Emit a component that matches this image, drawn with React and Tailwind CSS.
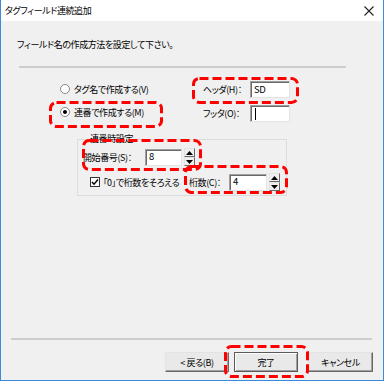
import React from 'react'

const fuente = {
  fontFamily: '"Noto Sans CJK JP", "Noto Sans", sans-serif',
}

// marco rojo punteado (anotación sobre la captura)
const Marca = ({ x, y, w, h }) => (
  <svg
    className="absolute pointer-events-none"
    style={{ left: x, top: y }}
    width={w}
    height={h}
  >
    <rect
      x="1.5"
      y="1.5"
      width={w - 3}
      height={h - 3}
      rx="6"
      fill="none"
      stroke="#ff0000"
      strokeWidth="3"
      strokeDasharray="9 4"
    />
  </svg>
)

const Caja = ({ w, children, cursor }) => (
  <div
    className={`relative h-[17px] bg-white border border-[#a0a0a0] border-r-[#e3e3e3] border-b-[#e3e3e3] shadow-[inset_1px_1px_0_#696969] flex items-center pl-[3px] text-[9.5px] leading-none ${w}`}
  >
    {cursor && <div className="w-px h-[12px] bg-black ml-[1px]" />}
    {children}
  </div>
)

const Flecha = ({ arriba }) => (
  <div className="h-[9px] w-[11px] bg-[#f0f0f0] border border-[#e3e3e3] border-r-[#696969] border-b-[#696969] flex items-center justify-center">
    <svg width="7" height="4" viewBox="0 0 7 4">
      {arriba ? <path d="M0 4 L3.5 0 L7 4 Z" fill="#000" /> : <path d="M0 0 L7 0 L3.5 4 Z" fill="#000" />}
    </svg>
  </div>
)

const Spinner = () => (
  <div className="flex flex-col ml-[2px]">
    <Flecha arriba />
    <Flecha />
  </div>
)

const Radio = ({ activo }) => (
  <div className="w-[10px] h-[10px] rounded-full border border-[#8a8a8a] bg-white flex items-center justify-center">
    {activo && <div className="w-[4px] h-[4px] rounded-full bg-black" />}
  </div>
)

const Boton = ({ children, principal, w = 'w-[64px]' }) => (
  <div
    className={`h-[20px] ${w} flex items-center justify-center leading-none bg-[#e9e9e9] border ${
      principal
        ? 'border-[#5a5a5a] shadow-[inset_1px_1px_0_#ffffff,inset_-1px_-1px_0_#a0a0a0]'
        : 'border-[#e3e3e3] border-r-[#696969] border-b-[#696969] shadow-[inset_-1px_-1px_0_#a0a0a0]'
    }`}
  >
    {children}
  </div>
)

export default function App() {
  return (
    <div
      className="relative w-[384px] h-[381px] bg-[#f0f0f0] border-x border-b border-[#3c8bd9] flex flex-col overflow-hidden text-black text-[9px] tracking-[-0.4px] [font-feature-settings:'palt'] whitespace-nowrap"
      style={fuente}
    >
      {/* barra de título */}
      <div className="h-[21px] bg-white flex items-center justify-between pl-[4px] pr-[9px] shrink-0">
        <span className="leading-none">タグフィールド連続追加</span>
        <svg width="10" height="10" viewBox="0 0 10 10">
          <path d="M0.5 0.5 L9.5 9.5 M9.5 0.5 L0.5 9.5" stroke="#222" strokeWidth="1.1" />
        </svg>
      </div>

      <div className="flex-1 flex flex-col">
        <p className="mt-[18px] ml-[16px] leading-[12px]">フィールド名の作成方法を設定して下さい。</p>
        <div className="ml-[18px] mt-[15px] w-[327px] h-[2px] bg-[#cdcdcd]" />

        {/* opciones */}
        <div className="flex mt-[12px] leading-none">
          <div className="ml-[59px] w-[143px] flex flex-col gap-[5px]">
            <div className="h-[18px] flex items-center gap-[4px]">
              <Radio />
              <span>タグ名で作成する(V)</span>
            </div>
            <div className="h-[18px] flex items-center gap-[4px]">
              <Radio activo />
              <span>連番で作成する(M)</span>
            </div>
          </div>
          <div className="flex flex-col gap-[7px] mt-[1px]">
            <div className="flex items-center">
              <span className="w-[47px]">ヘッダ(H)：</span>
              <Caja w="w-[40px]">SD</Caja>
            </div>
            <div className="flex items-center">
              <span className="w-[47px]">フッタ(O)：</span>
              <Caja w="w-[40px]" cursor />
            </div>
          </div>
        </div>

        {/* grupo de numeración */}
        <fieldset className="ml-[76px] mt-[11px] w-[210px] border border-[#dcdcdc] px-[5px] pb-[4px] leading-none">
          <legend className="ml-[5px] px-[2px] leading-[12px]">連番時設定</legend>
          <div className="flex items-center mt-[3px]">
            <span className="w-[62px]">開始番号(S)：</span>
            <Caja w="w-[37px]">8</Caja>
            <Spinner />
          </div>
          <div className="flex items-center mt-[7px]">
            <div className="ml-[7px] w-[10px] h-[10px] bg-white border border-[#333] flex items-center justify-center">
              <svg width="8" height="8" viewBox="0 0 8 8">
                <path d="M1 4 L3 6.2 L7 1.5" stroke="#000" strokeWidth="1.4" fill="none" />
              </svg>
            </div>
            <span className="ml-[3px] w-[86px]">「0」で桁数をそろえる</span>
            <span className="w-[40px]">桁数(C)：</span>
            <Caja w="w-[38px]">4</Caja>
            <Spinner />
          </div>
        </fieldset>

        {/* pie */}
        <div className="mt-auto">
          <div className="ml-[10px] w-[361px] h-[2px] bg-[#cdcdcd]" />
          <div className="flex mt-[12px] mb-[8px] ml-[164px]">
            <Boton>&lt; 戻る(B)</Boton>
            <div className="ml-[5px]">
              <Boton principal>完了</Boton>
            </div>
            <div className="ml-[10px]">
              <Boton w="w-[65px]">キャンセル</Boton>
            </div>
          </div>
        </div>
      </div>

      <Marca x={48} y={101} w={114} h={27} />
      <Marca x={191} y={77} w={107} h={27} />
      <Marca x={81} y={139} w={120} h={32} />
      <Marca x={183} y={165} w={104} h={29} />
      <Marca x={223} y={345} w={85} h={33} />
    </div>
  )
}
